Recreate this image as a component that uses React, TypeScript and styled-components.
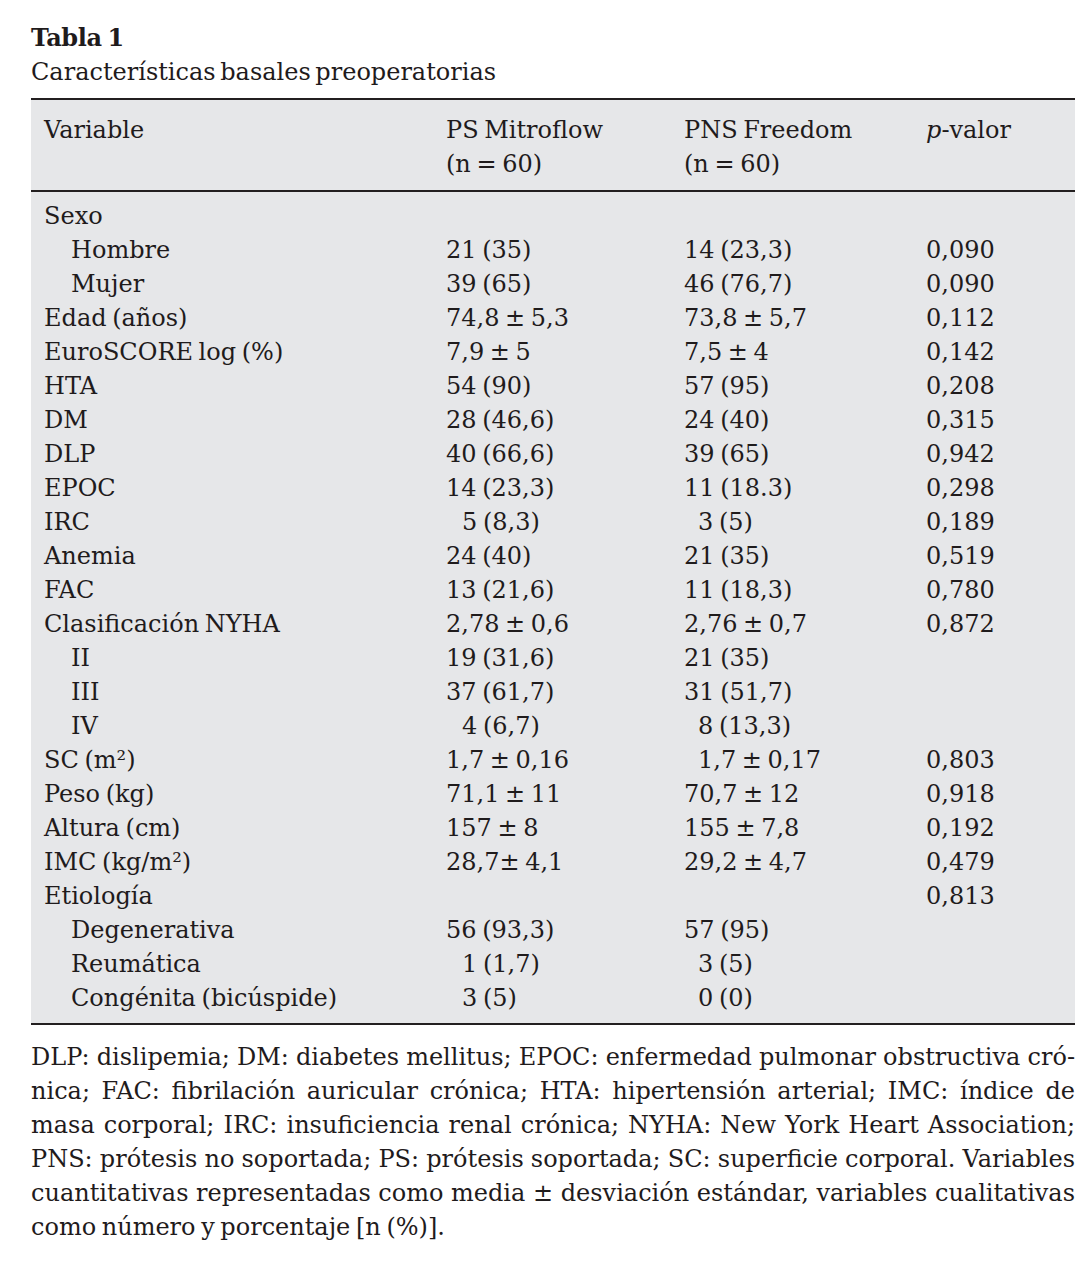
import React from "react";
import styled, { createGlobalStyle } from "styled-components";

const Global = createGlobalStyle`
  html, body { margin: 0; padding: 0; background: #ffffff; }
  body { font-family: "DejaVu Serif", "Liberation Serif", serif; color: #1f1b1c; }
`;

const Page = styled.div`
  width: 1044px;
  padding: 21px 12px 20px 31px;
  font-size: 24px;
  line-height: 34px;
  word-spacing: -2px;
`;

const Title = styled.div`
  font-weight: bold;
  font-size: 24px;
  letter-spacing: -0.4px;
`;

const Subtitle = styled.div`
  margin-bottom: 9px;
  word-spacing: -3px;
`;

const Table = styled.div`
  border-top: 2px solid #231f20;
  border-bottom: 2px solid #231f20;
  background: #e6e7e9;
`;

const Head = styled.div`
  padding: 13px 0 9px;
  border-bottom: 2px solid #231f20;
`;

const Body = styled.div`
  padding: 7px 0 8px;
`;

const Row = styled.div`
  display: grid;
  grid-template-columns: 402px 238px 242px 1fr;
  padding-left: 13px;
`;

const Cell = styled.div<{ $indent?: number }>`
  padding-left: ${(p) => p.$indent ?? 0}px;
  white-space: nowrap;
`;

const Italic = styled.i``;

const Notes = styled.div`
  margin-top: 15px;
`;

const NoteLine = styled.div<{ $last?: boolean }>`
  text-align: justify;
  text-align-last: ${(p) => (p.$last ? "left" : "justify")};
  white-space: nowrap;
`;

type R = {
  label: string;
  sub?: boolean;
  a?: string;
  b?: string;
  p?: string;
  ai?: number;
  bi?: number;
};

const rows: R[] = [
  { label: "Sexo" },
  { label: "Hombre", sub: true, a: "21 (35)", b: "14 (23,3)", p: "0,090" },
  { label: "Mujer", sub: true, a: "39 (65)", b: "46 (76,7)", p: "0,090" },
  { label: "Edad (años)", a: "74,8 ± 5,3", b: "73,8 ± 5,7", p: "0,112" },
  { label: "EuroSCORE log (%)", a: "7,9 ± 5", b: "7,5 ± 4", p: "0,142" },
  { label: "HTA", a: "54 (90)", b: "57 (95)", p: "0,208" },
  { label: "DM", a: "28 (46,6)", b: "24 (40)", p: "0,315" },
  { label: "DLP", a: "40 (66,6)", b: "39 (65)", p: "0,942" },
  { label: "EPOC", a: "14 (23,3)", b: "11 (18.3)", p: "0,298" },
  { label: "IRC", a: "5 (8,3)", ai: 16, b: "3 (5)", bi: 14, p: "0,189" },
  { label: "Anemia", a: "24 (40)", b: "21 (35)", p: "0,519" },
  { label: "FAC", a: "13 (21,6)", b: "11 (18,3)", p: "0,780" },
  { label: "Clasificación NYHA", a: "2,78 ± 0,6", b: "2,76 ± 0,7", p: "0,872" },
  { label: "II", sub: true, a: "19 (31,6)", b: "21 (35)" },
  { label: "III", sub: true, a: "37 (61,7)", b: "31 (51,7)" },
  { label: "IV", sub: true, a: "4 (6,7)", ai: 16, b: "8 (13,3)", bi: 14 },
  { label: "SC (m²)", a: "1,7 ± 0,16", b: "1,7 ± 0,17", bi: 14, p: "0,803" },
  { label: "Peso (kg)", a: "71,1 ± 11", b: "70,7 ± 12", p: "0,918" },
  { label: "Altura (cm)", a: "157 ± 8", b: "155 ± 7,8", p: "0,192" },
  { label: "IMC (kg/m²)", a: "28,7± 4,1", b: "29,2 ± 4,7", p: "0,479" },
  { label: "Etiología", p: "0,813" },
  { label: "Degenerativa", sub: true, a: "56 (93,3)", b: "57 (95)" },
  { label: "Reumática", sub: true, a: "1 (1,7)", ai: 16, b: "3 (5)", bi: 14 },
  { label: "Congénita (bicúspide)", sub: true, a: "3 (5)", ai: 16, b: "0 (0)", bi: 14 },
];

const notes = [
  "DLP: dislipemia; DM: diabetes mellitus; EPOC: enfermedad pulmonar obstructiva cró-",
  "nica; FAC: fibrilación auricular crónica; HTA: hipertensión arterial; IMC: índice de",
  "masa corporal; IRC: insuficiencia renal crónica; NYHA: New York Heart Association;",
  "PNS: prótesis no soportada; PS: prótesis soportada; SC: superficie corporal. Variables",
  "cuantitativas representadas como media ± desviación estándar, variables cualitativas",
  "como número y porcentaje [n (%)].",
];

export default function App() {
  return (
    <Page>
      <Global />
      <Title>Tabla 1</Title>
      <Subtitle>Características basales preoperatorias</Subtitle>
      <Table>
        <Head>
          <Row>
            <Cell>Variable</Cell>
            <Cell>PS Mitroflow</Cell>
            <Cell>PNS Freedom</Cell>
            <Cell>
              <Italic>p</Italic>-valor
            </Cell>
          </Row>
          <Row>
            <Cell />
            <Cell>(n = 60)</Cell>
            <Cell>(n = 60)</Cell>
            <Cell />
          </Row>
        </Head>
        <Body>
          {rows.map((r, i) => (
            <Row key={i}>
              <Cell $indent={r.sub ? 27 : 0}>{r.label}</Cell>
              <Cell $indent={r.ai}>{r.a ?? ""}</Cell>
              <Cell $indent={r.bi}>{r.b ?? ""}</Cell>
              <Cell>{r.p ?? ""}</Cell>
            </Row>
          ))}
        </Body>
      </Table>
      <Notes>
        {notes.map((n, i) => (
          <NoteLine key={i} $last={i === notes.length - 1}>
            {n}
          </NoteLine>
        ))}
      </Notes>
    </Page>
  );
}
